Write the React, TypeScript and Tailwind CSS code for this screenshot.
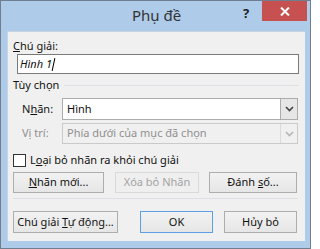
import React from "react";

const Chevron = ({ color }: { color: string }) => (
  <svg width="9" height="6" viewBox="0 0 9 6">
    <path d="M1 1 L4.5 4.5 L8 1" fill="none" stroke={color} strokeWidth="1.6" />
  </svg>
);

const Btn = ({
  children,
  w,
  disabled,
  def,
}: {
  children: React.ReactNode;
  w: string;
  disabled?: boolean;
  def?: boolean;
}) => (
  <div
    className={
      "flex h-full shrink-0 items-center justify-center whitespace-nowrap border " +
      w +
      " " +
      (disabled
        ? "border-[#d9d9d9] bg-[#efefef] text-[#a3a3a3]"
        : def
        ? "border-[#5ea0e6] bg-gradient-to-b from-[#f2f2f2] to-[#e6e6e6] text-[#111]"
        : "border-[#adadad] bg-gradient-to-b from-[#f2f2f2] to-[#e6e6e6] text-[#111]")
    }
  >
    {children}
  </div>
);

export default function App() {
  return (
    <div
      className="flex h-[249px] w-[311px] flex-col whitespace-nowrap border border-[#6f7f90] bg-[#aecbe9] text-[11px] text-[#111]"
      style={{ fontFamily: '"Noto Sans", "Open Sans", sans-serif' }}
    >
      <div className="relative flex h-[30px] shrink-0 items-center justify-center">
        <span className="pb-[2px] pl-[2px] text-[15px] text-[#333]">Phụ đề</span>
        <span className="absolute left-[242px] top-[3px] text-[13px] font-bold text-[#222]">?</span>
        <div className="absolute right-[3px] top-0 flex h-[20px] w-[45px] items-center justify-center bg-[#c75050]">
          <svg width="10" height="9" viewBox="0 0 10 9">
            <path d="M1 0.5 L9 8.5 M9 0.5 L1 8.5" stroke="#fff" strokeWidth="2" />
          </svg>
        </div>
      </div>
      <div className="ml-[6px] flex h-[210px] w-[298px] flex-col border-t border-l border-[#c7d3df] bg-[#f0f0f0] pl-[5px] pr-[6px] pt-[6px]">
        <div className="h-[16px] leading-[16px]">
          <u>C</u>hú giải:
        </div>
        <div className="ml-[4px] flex h-[20px] w-[282px] items-center border border-[#7a7a7a] bg-white pl-[2px] italic">
          Hình 1<span className="ml-[1px] inline-block h-[13px] w-px rotate-[12deg] bg-black" />
        </div>
        <div className="mt-[3px] flex h-[16px] items-center">
          <span>Tùy chọn</span>
          <div className="ml-[5px] h-px flex-1 bg-[#dcdfe3]" />
        </div>
        <div className="mt-[5px] flex h-[22px] items-center pl-[9px]">
          <span className="w-[40px] shrink-0">
            N<u>h</u>ãn:
          </span>
          <div className="flex h-full w-[236px] shrink-0 items-center border border-[#acacac] bg-white">
            <span className="flex-1 pl-[4px]">Hình</span>
            <div className="flex h-full w-[17px] items-center justify-center border-l border-[#acacac] bg-[#e6e6e6]">
              <Chevron color="#444" />
            </div>
          </div>
        </div>
        <div className="mt-[3px] flex h-[21px] items-center pl-[9px] text-[#8f8f8f]">
          <span className="w-[40px] shrink-0">Vị trí:</span>
          <div className="flex h-full w-[236px] shrink-0 items-center border border-[#cacaca] bg-[#f0f0f0]">
            <span className="flex-1 pl-[4px]">Phía dưới của mục đã chọn</span>
            <div className="flex h-full w-[17px] items-center justify-center border-l border-[#dadada]">
              <Chevron color="#b5b5b5" />
            </div>
          </div>
        </div>
        <div className="mt-[10px] flex h-[13px] items-center">
          <div className="h-[13px] w-[13px] shrink-0 border border-[#333] bg-white" />
          <span className="ml-[4px]">
            L<u>o</u>ại bỏ nhãn ra khỏi chú giải
          </span>
        </div>
        <div className="mt-[5px] flex h-[21px]">
          <Btn w="w-[91px]">
            <span>
              <u>N</u>hãn mới...
            </span>
          </Btn>
          <div className="ml-[11px] h-full">
            <Btn w="w-[84px]" disabled>
              Xóa bỏ Nhãn
            </Btn>
          </div>
          <div className="ml-[10px] h-full">
            <Btn w="w-[88px]">
              <span>
                Đánh <u>s</u>ố...
              </span>
            </Btn>
          </div>
        </div>
        <div className="mt-[5px] h-px w-[285px] bg-[#dcdfe3]" />
        <div className="mt-[12px] flex h-[22px]">
          <Btn w="w-[105px]">
            <span>
              Chú giải <u>T</u>ự động...
            </span>
          </Btn>
          <div className="ml-[22px] h-full">
            <Btn w="w-[73px]" def>
              OK
            </Btn>
          </div>
          <div className="ml-[11px] h-full">
            <Btn w="w-[73px]">Hủy bỏ</Btn>
          </div>
        </div>
      </div>
    </div>
  );
}
